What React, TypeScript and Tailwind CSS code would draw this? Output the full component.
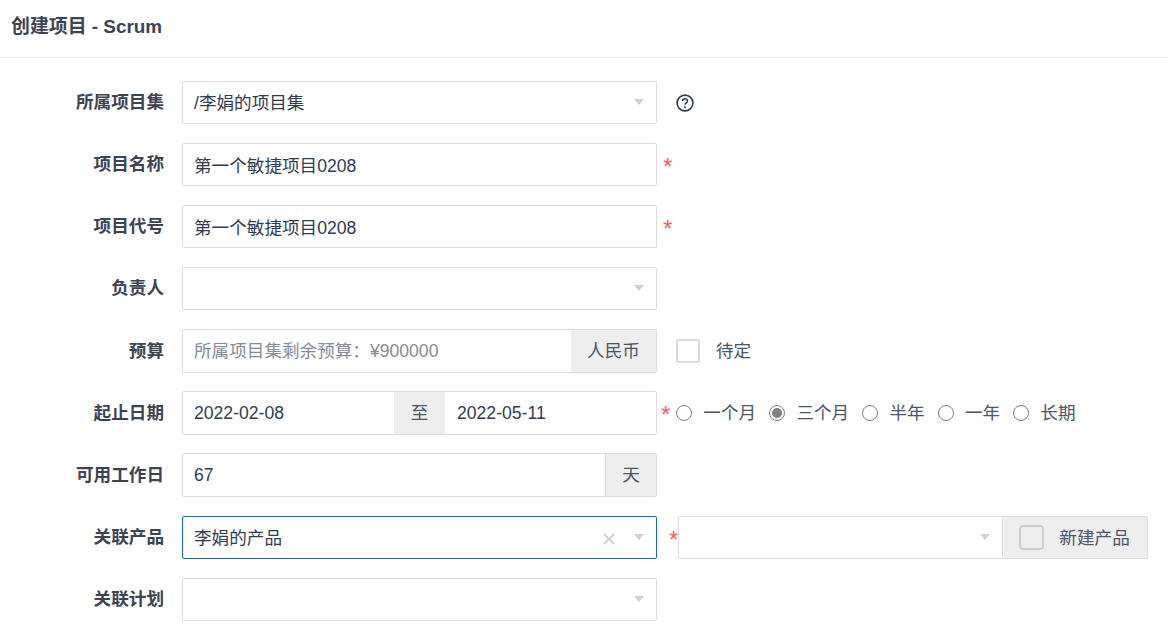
import type {ReactNode} from 'react';

const font = {fontFamily: '"Liberation Sans", "Noto Sans CJK SC", sans-serif'};

function Caret() {
    return <span className="w-0 h-0 border-x-[5px] border-x-transparent border-t-[6px] border-t-[#cbd0db] -mt-[1px]" />;
}

function Star({className = ''}: {className?: string}) {
    return <span className={`text-[#ff5d5d] text-[24px] leading-none pt-[4px] ${className}`}>*</span>;
}

function Row({label, children, h = 'h-[43px]', mb = 'mb-[19px]'}: {label: string; children: ReactNode; h?: string; mb?: string}) {
    return (
        <div className={`flex items-center ${h} ${mb}`}>
            <div className="w-[164px] shrink-0 text-right font-bold text-[#3c4353] -mt-[1px]">{label}</div>
            <div className="ml-[18px] flex items-center flex-1 min-w-0">{children}</div>
        </div>
    );
}

function SelectBox({value, clear, focus}: {value?: string; clear?: boolean; focus?: boolean}) {
    return (
        <div className={`w-[475px] h-[43px] flex items-center rounded-[2px] border bg-white pl-[11px] pr-[12px] ${focus ? 'border-[#0c64eb]' : 'border-[#dcdcdc]'}`}>
            <span className="flex-1 text-[#313c52]">{value}</span>
            {clear && <span className="mr-[19px] mt-[3px] text-[#d0d0d0]"><svg width="12" height="12" viewBox="0 0 12 12"><path d="M1 1l10 10M11 1L1 11" stroke="currentColor" strokeWidth="2" /></svg></span>}
            <Caret />
        </div>
    );
}

function TextBox({value}: {value: string}) {
    return (
        <div className="w-[475px] h-[43px] flex items-center rounded-[2px] border border-[#dcdcdc] bg-white px-[11px] text-[#313c52]">
            <span className="mt-[2px]">{value}</span>
        </div>
    );
}

function Radio({label, checked}: {label: string; checked?: boolean}) {
    return (
        <div className="flex items-center">
            <span className="w-[16px] h-[16px] rounded-full border border-[#808080] flex items-center justify-center">
                {checked && <span className="w-[10px] h-[10px] rounded-full bg-[#808080]" />}
            </span>
            <span className="ml-[11px] text-[#4d5566]">{label}</span>
        </div>
    );
}

export default function App() {
    return (
        <div className="w-[1168px] h-[632px] overflow-hidden bg-white text-[17.6px] leading-[26px]" style={font}>
            <div className="h-[58px] border-b border-[#ececec] pl-[11px] pt-[14px] font-bold text-[18.9px] text-[#3c4353]">
                创建项目 - Scrum
            </div>
            <div className="pt-[23px]">
                <Row label="所属项目集">
                    <SelectBox value="/李娟的项目集" />
                    <svg className="ml-[19px] text-[#313c52]" width="18" height="18" viewBox="0 0 18 18" fill="none" stroke="currentColor">
                        <circle cx="9" cy="9" r="7.9" strokeWidth="1.6" />
                        <path d="M6.5 7.2c0-1.5 1-2.5 2.5-2.5s2.5.9 2.5 2.2c0 1.9-2.5 1.9-2.5 3.8" strokeWidth="1.5" />
                        <circle cx="9" cy="13.2" r="1" fill="currentColor" stroke="none" />
                    </svg>
                </Row>
                <Row label="项目名称">
                    <TextBox value="第一个敏捷项目0208" />
                    <Star className="ml-[6px]" />
                </Row>
                <Row label="项目代号">
                    <TextBox value="第一个敏捷项目0208" />
                    <Star className="ml-[6px]" />
                </Row>
                <Row label="负责人">
                    <SelectBox />
                </Row>
                <Row label="预算" h="h-[44px]" mb="mb-[18px]">
                    <div className="w-[475px] h-[44px] flex rounded-[2px] border border-[#dcdcdc] bg-white">
                        <span className="flex-1 pl-[11px] flex items-center text-[#868b97]">所属项目集剩余预算：¥900000</span>
                        <span className="w-[85px] bg-[#eeeeee] flex items-center justify-center text-[#4d5566]">人民币</span>
                    </div>
                    <span className="ml-[19px] w-[24px] h-[24px] rounded-[3px] border-2 border-[#dcdcdc]" />
                    <span className="ml-[16px] -mt-[1px] text-[#4d5566]">待定</span>
                </Row>
                <Row label="起止日期" h="h-[44px]" mb="mb-[18px]">
                    <div className="w-[475px] h-[44px] flex rounded-[2px] border border-[#dcdcdc] bg-white text-[#313c52]">
                        <span className="w-[211px] pl-[11px] flex items-center">2022-02-08</span>
                        <span className="w-[51px] bg-[#eeeeee] flex items-center justify-center text-[#4d5566]">至</span>
                        <span className="flex-1 pl-[12px] flex items-center">2022-05-11</span>
                    </div>
                    <Star className="ml-[4px]" />
                    <div className="ml-[6px] flex items-center gap-[13.25px]">
                        <Radio label="一个月" />
                        <Radio label="三个月" checked />
                        <Radio label="半年" />
                        <Radio label="一年" />
                        <Radio label="长期" />
                    </div>
                </Row>
                <Row label="可用工作日" h="h-[44px]">
                    <div className="w-[475px] h-[44px] flex rounded-[2px] border border-[#dcdcdc] bg-white text-[#313c52]">
                        <span className="flex-1 pl-[11px] flex items-center">67</span>
                        <span className="w-[51px] bg-[#eeeeee] border-l border-[#dcdcdc] flex items-center justify-center text-[#4d5566]">天</span>
                    </div>
                </Row>
                <Row label="关联产品">
                    <SelectBox value="李娟的产品" clear focus />
                    <Star className="ml-[12px]" />
                    <div className="w-[325px] h-[43px] flex items-center justify-end rounded-[2px] border border-[#dcdcdc] bg-white pr-[12px]">
                        <Caret />
                    </div>
                    <div className="w-[145px] h-[43px] flex items-center rounded-r-[2px] border border-l-0 border-[#dcdcdc] bg-[#eeeeee] pl-[16px]">
                        <span className="w-[25px] h-[25px] rounded-[4px] border-2 border-[#cfcfcf] bg-[#eeeeee]" />
                        <span className="ml-[15px] text-[#4d5566]">新建产品</span>
                    </div>
                </Row>
                <Row label="关联计划">
                    <SelectBox />
                </Row>
            </div>
        </div>
    );
}
